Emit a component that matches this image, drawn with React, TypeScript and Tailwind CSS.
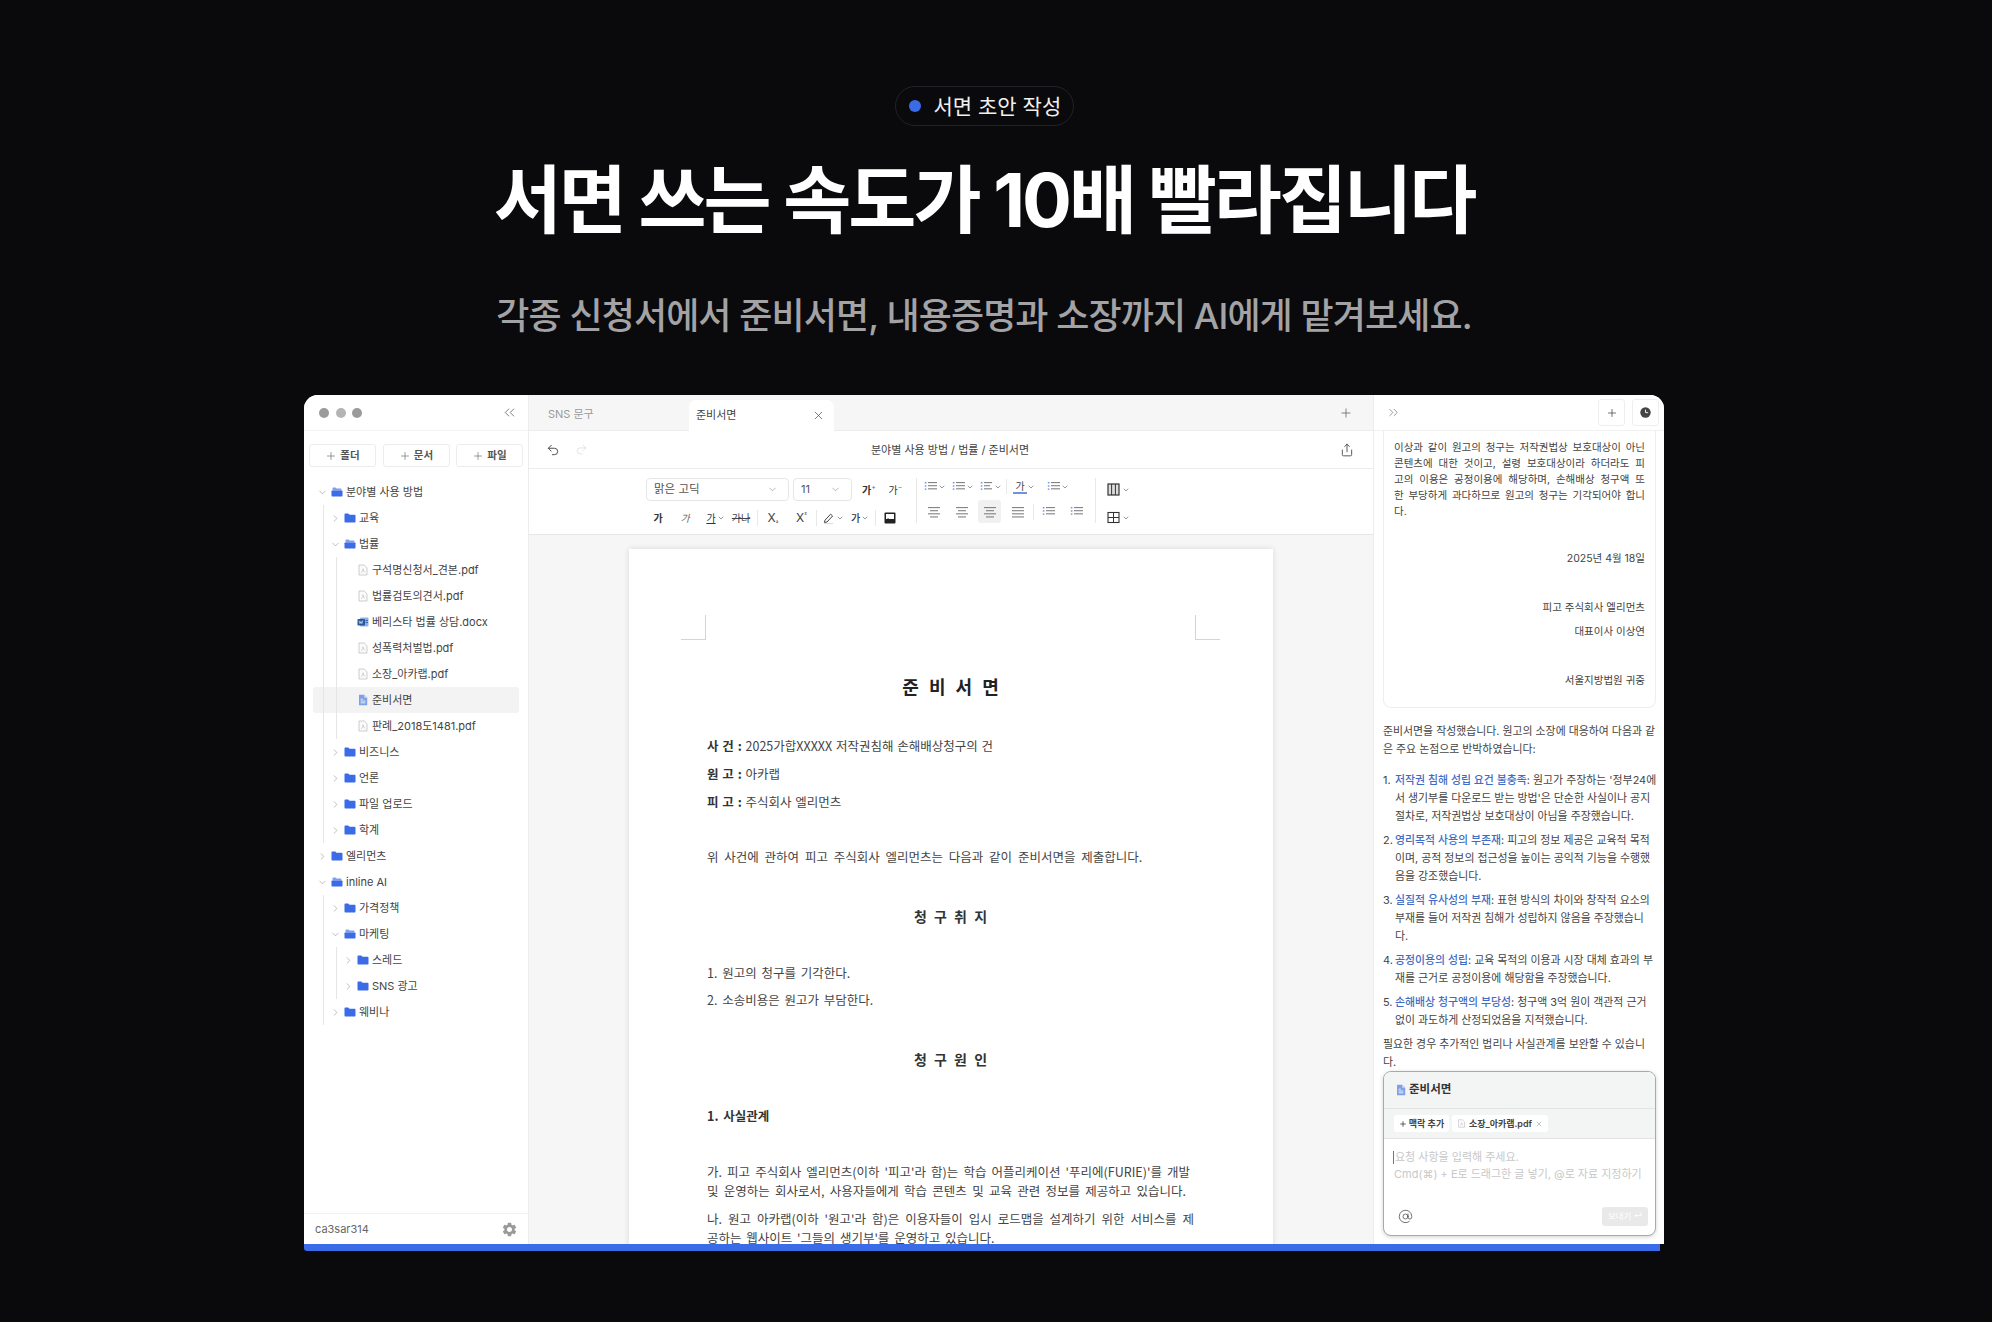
import {
  AtSign,
  ChevronDown,
  ChevronRight,
  ChevronsLeft,
  ChevronsRight,
  Plus,
  Redo2,
  Share,
  Undo2,
  X,
} from "lucide-react";
import { MdSettings } from "react-icons/md";

type Kind = "open" | "closed" | "pdf" | "docx" | "doc";

type Row = {
  label: string;
  depth: 0 | 1 | 2;
  kind: Kind;
  guides: number[];
  selected?: boolean;
};

const rows: Row[] = [
  { label: "분야별 사용 방법", depth: 0, kind: "open", guides: [] },
  { label: "교육", depth: 1, kind: "closed", guides: [1] },
  { label: "법률", depth: 1, kind: "open", guides: [1] },
  { label: "구석명신청서_견본.pdf", depth: 2, kind: "pdf", guides: [1, 2] },
  { label: "법률검토의견서.pdf", depth: 2, kind: "pdf", guides: [1, 2] },
  { label: "베리스타 법률 상담.docx", depth: 2, kind: "docx", guides: [1, 2] },
  { label: "성폭력처벌법.pdf", depth: 2, kind: "pdf", guides: [1, 2] },
  { label: "소장_아카랩.pdf", depth: 2, kind: "pdf", guides: [1, 2] },
  { label: "준비서면", depth: 2, kind: "doc", guides: [1, 2], selected: true },
  { label: "판례_2018도1481.pdf", depth: 2, kind: "pdf", guides: [1, 2] },
  { label: "비즈니스", depth: 1, kind: "closed", guides: [1] },
  { label: "언론", depth: 1, kind: "closed", guides: [1] },
  { label: "파일 업로드", depth: 1, kind: "closed", guides: [1] },
  { label: "학계", depth: 1, kind: "closed", guides: [1] },
  { label: "엘리먼츠", depth: 0, kind: "closed", guides: [] },
  { label: "inline AI", depth: 0, kind: "open", guides: [] },
  { label: "가격정책", depth: 1, kind: "closed", guides: [1] },
  { label: "마케팅", depth: 1, kind: "open", guides: [1] },
  { label: "스레드", depth: 2, kind: "closed", guides: [1, 2] },
  { label: "SNS 광고", depth: 2, kind: "closed", guides: [1, 2] },
  { label: "웨비나", depth: 1, kind: "closed", guides: [1] },
];

function FolderClosed() {
  return (
    <svg width="12" height="12" viewBox="0 0 12 12" className="shrink-0">
      <path
        d="M0.5 2.4c0-.6.4-1 1-1h2.7l1.3 1.4h5c.6 0 1 .4 1 1v5.8c0 .6-.4 1-1 1h-9c-.6 0-1-.4-1-1z"
        fill="#3b6be6"
      />
    </svg>
  );
}

function FolderOpen() {
  return (
    <svg width="12" height="12" viewBox="0 0 12 12" className="shrink-0">
      <path d="M1.5 2.2c0-.5.3-.8.8-.8h2.2l1.1 1.2h4.1c.5 0 .8.3.8.8v1H1.5z" fill="#7fa0ee" />
      <path
        d="M0.5 5.2c0-.5.4-.8.8-.8h9.4c.5 0 .8.3.8.8v4.4c0 .6-.4 1-1 1h-9c-.6 0-1-.4-1-1z"
        fill="#3b6be6"
      />
    </svg>
  );
}

function PdfFile({ size = 12 }: { size?: number }) {
  return (
    <svg width={size} height={size} viewBox="0 0 12 12" className="shrink-0">
      <path
        d="M2 1h5.2L10 3.8V11H2z"
        fill="#fbfbfb"
        stroke="#bfc1c2"
        strokeWidth="0.8"
        strokeLinejoin="round"
      />
      <path d="M4 8.8c1.2-.6 2.2-2.2 2-4 .4 1.8 1 3 2.2 3.6" fill="none" stroke="#b4b6b8" strokeWidth="0.6" />
    </svg>
  );
}

function DocxFile() {
  return (
    <svg width="12" height="12" viewBox="0 0 12 12" className="shrink-0">
      <rect x="3" y="1.5" width="8.5" height="9" rx="1" fill="#8fb0ea" />
      <rect x="0.5" y="3" width="7.5" height="6.5" rx="0.8" fill="#2b579a" />
      <path d="M2 4.6l1 3 .9-2.2.9 2.2 1-3" fill="none" stroke="#ffffff" strokeWidth="0.6" />
      <rect x="8.5" y="4" width="2.5" height="0.8" fill="#2b579a" />
      <rect x="8.5" y="6" width="2.5" height="0.8" fill="#2b579a" />
    </svg>
  );
}

function DocFile({ size = 12 }: { size?: number }) {
  return (
    <svg width={size} height={size} viewBox="0 0 12 12" className="shrink-0">
      <path d="M2 0.8h5.2L10.2 3.8V11.2H2z" fill="#7f9fe6" />
      <path d="M7.2 0.8v3h3" fill="#cddaf6" />
      <path d="M3.6 5.2h2.2M3.6 7h4.8M3.6 8.8h4.8" stroke="#ffffff" strokeWidth="0.8" />
    </svg>
  );
}

function TreeRow({ row }: { row: Row }) {
  const pad = row.depth === 0 ? "pl-[6px]" : row.depth === 1 ? "pl-[19px]" : "pl-[32px]";
  return (
    <div
      className={`relative flex h-[26px] items-center ${pad} ${
        row.selected ? "rounded-[3px] bg-[#f2f3f2]" : ""
      }`}
    >
      {row.guides.includes(1) && <span className="absolute inset-y-0 left-[10px] w-px bg-[#e6e6e6]" />}
      {row.guides.includes(2) && <span className="absolute inset-y-0 left-[23px] w-px bg-[#e6e6e6]" />}
      <span className="flex w-[7px] shrink-0 justify-center">
        {row.kind === "open" && <ChevronDown size={11} strokeWidth={1.4} className="shrink-0 text-[#999]" />}
        {row.kind === "closed" && <ChevronRight size={11} strokeWidth={1.4} className="shrink-0 text-[#999]" />}
      </span>
      <span className="ml-[5px] flex w-[12px] shrink-0 items-center">
        {row.kind === "open" && <FolderOpen />}
        {row.kind === "closed" && <FolderClosed />}
        {row.kind === "pdf" && <PdfFile />}
        {row.kind === "docx" && <DocxFile />}
        {row.kind === "doc" && <DocFile />}
      </span>
      <span className="ml-[3px] whitespace-nowrap text-[11px] text-[#444]">{row.label}</span>
    </div>
  );
}

function Sidebar() {
  return (
    <aside className="flex w-[225px] shrink-0 flex-col border-r border-[#ececec] bg-white">
      <div className="flex h-[36px] shrink-0 items-center justify-between border-b border-[#f3f3f3] pl-[15px] pr-[10px]">
        <div className="flex items-center gap-[6.5px]">
          <span className="size-[10px] rounded-full bg-[#9b9b9b]" />
          <span className="size-[10px] rounded-full bg-[#b4b4b4]" />
          <span className="size-[10px] rounded-full bg-[#9b9b9b]" />
        </div>
        <ChevronsLeft size={17} strokeWidth={1.2} className="text-[#666]" />
      </div>
      <div className="flex justify-between px-[5px] pt-[13px]">
        {["폴더", "문서", "파일"].map((t) => (
          <div
            key={t}
            className="flex h-[23px] w-[67px] items-center justify-center gap-[3px] rounded-[3px] border border-[#ececec] text-[10.5px] font-semibold text-[#555]"
          >
            <Plus size={12} strokeWidth={1.3} className="text-[#666]" />
            {t}
          </div>
        ))}
      </div>
      <div className="flex-1 pl-[9px] pr-[9px] pt-[12px]">
        {rows.map((r) => (
          <TreeRow key={r.label} row={r} />
        ))}
      </div>
      <div className="flex h-[31px] shrink-0 items-center justify-between border-t border-[#f1f1f1] pl-[11px] pr-[10px]">
        <span className="text-[11px] text-[#666]">ca3sar314</span>
        <MdSettings size={17} className="text-[#9a9a9a]" />
      </div>
    </aside>
  );
}

function Lines({ widths, dots = false }: { widths: number[]; dots?: boolean }) {
  return (
    <svg width="14" height="12" viewBox="0 0 14 12" className="shrink-0">
      {widths.map((w, i) => (
        <rect key={i} x={dots ? 4 : (14 - w) / 2} y={1.2 + i * 3.1} width={w} height="0.9" fill="#666" />
      ))}
      {dots &&
        [1, 4.3, 7.4].map((y) => <rect key={y} x="0.8" y={y} width="1.6" height="1.4" fill="#6f93e0" />)}
    </svg>
  );
}

function TinyChevron() {
  return <ChevronDown size={8} strokeWidth={2} className="shrink-0 text-[#666]" />;
}

function VDivider({ className }: { className: string }) {
  return <span className={`w-px shrink-0 bg-[#e8e8e8] ${className}`} />;
}

function Ga({ className = "" }: { className?: string }) {
  return <span className={`text-[10px] leading-none text-[#333] ${className}`}>가</span>;
}

function FormatToolbar() {
  return (
    <div className="flex h-[66px] shrink-0 border-b border-[#e6e6e6] pl-[117px] pt-[9px]">
      <div className="flex w-[270px] shrink-0 flex-col gap-[5px]">
        <div className="flex h-[23px] items-center">
          <div className="flex h-[23px] w-[143px] items-center justify-between rounded-[4px] border border-[#e6e6e6] pl-[7px] pr-[10px] text-[11.5px] text-[#555]">
            맑은 고딕
            <ChevronDown size={11} strokeWidth={1.3} className="text-[#888]" />
          </div>
          <div className="ml-[4px] flex h-[23px] w-[59px] items-center justify-between rounded-[4px] border border-[#e6e6e6] pl-[7px] pr-[10px] text-[11px] text-[#555]">
            11
            <ChevronDown size={11} strokeWidth={1.3} className="text-[#888]" />
          </div>
          <div className="flex w-[28px] items-center justify-center pl-[6px]">
            <Ga className="font-bold" />
            <span className="-mt-[7px] text-[7px] leading-none text-[#3b6be6]">+</span>
          </div>
          <div className="flex w-[28px] items-center justify-center pl-[3px]">
            <Ga />
            <span className="-mt-[7px] text-[7px] leading-none text-[#777]">−</span>
          </div>
        </div>
        <div className="flex h-[23px] items-center pl-[1px]">
          <span className="flex w-[22px] justify-center"><Ga className="font-bold" /></span>
          <span className="flex w-[32px] justify-center"><Ga className="italic text-[#666]" /></span>
          <span className="flex w-[29px] items-center justify-center gap-px">
            <Ga className="underline" />
            <TinyChevron />
          </span>
          <span className="flex w-[22px] justify-center whitespace-nowrap text-[10px] leading-none text-[#444] line-through">가나</span>
          <span className="flex w-[10px] justify-center"><VDivider className="h-[16px]" /></span>
          <span className="flex w-[22px] items-baseline justify-center text-[12px] leading-none text-[#444]">
            X<span className="text-[6px]">₂</span>
          </span>
          <span className="ml-[3px] flex w-[29px] items-start justify-center text-[12px] leading-none text-[#444]">
            X<span className="text-[6px] leading-none">²</span>
          </span>
          <VDivider className="h-[16px]" />
          <span className="ml-[3px] flex w-[27px] items-center justify-center gap-px">
            <svg width="12" height="12" viewBox="0 0 12 12" className="shrink-0">
              <path d="M2 8.2L7.6 2.2l2 1.8-5.6 6-2.6.4z" fill="none" stroke="#444" strokeWidth="1" />
              <path d="M1 11.6h9" stroke="#d9d9d9" strokeWidth="1" />
            </svg>
            <TinyChevron />
          </span>
          <span className="flex w-[26px] items-center justify-center gap-px">
            <Ga className="font-medium" />
            <TinyChevron />
          </span>
          <VDivider className="ml-[2px] h-[16px]" />
          <span className="flex w-[28px] justify-center">
            <svg width="12" height="12" viewBox="0 0 12 12">
              <rect x="0.5" y="0.5" width="11" height="11" rx="1" fill="#222" />
              <rect x="2" y="2" width="8" height="5" fill="#fff" />
              <path d="M1 10l3-4 2.4 2.4L8 7l3 3z" fill="#222" />
            </svg>
          </span>
        </div>
      </div>
      <div className="mb-[11px] flex w-[180px] shrink-0 flex-col gap-[5px] border-x border-[#e8e8e8]">
        <div className="flex h-[23px] items-center pl-[7px]">
          <span className="flex w-[21px] items-center"><Lines widths={[9, 9, 9]} dots /><TinyChevron /></span>
          <span className="ml-[7px] flex w-[22px] items-center"><Lines widths={[9, 9, 9]} dots /><TinyChevron /></span>
          <span className="ml-[6px] flex w-[22px] items-center"><Lines widths={[8, 6, 8]} dots /><TinyChevron /></span>
          <VDivider className="ml-[4px] h-[15px]" />
          <span className="ml-[6px] flex w-[26px] items-center">
            <span className="relative flex h-[14px] w-[14px] justify-center border-b-2 border-[#6f93e0] text-[10px] leading-[12px] text-[#444]">가</span>
            <TinyChevron />
          </span>
          <span className="ml-[8px] flex w-[26px] items-center"><Lines widths={[9, 9, 9]} dots /><TinyChevron /></span>
        </div>
        <div className="flex h-[23px] items-center pl-[5px]">
          <span className="flex size-[23px] items-center justify-center"><Lines widths={[12, 8, 12, 8]} /></span>
          <span className="ml-[5px] flex size-[23px] items-center justify-center"><Lines widths={[12, 8, 12, 8]} /></span>
          <span className="ml-[5px] flex size-[23px] items-center justify-center rounded-[3px] bg-[#f0f1f0]"><Lines widths={[12, 8, 12, 8]} /></span>
          <span className="ml-[5px] flex size-[23px] items-center justify-center"><Lines widths={[12, 12, 12, 12]} /></span>
          <VDivider className="ml-[4px] h-[16px]" />
          <span className="ml-[3px] flex size-[23px] items-center justify-center"><Lines widths={[9, 9, 9]} dots /></span>
          <span className="ml-[5px] flex size-[23px] items-center justify-center"><Lines widths={[9, 9, 9]} dots /></span>
        </div>
      </div>
      <div className="flex flex-col gap-[5px] pl-[11px]">
        <div className="flex h-[23px] items-center gap-[2px]">
          <svg width="13" height="13" viewBox="0 0 13 13" className="shrink-0">
            <rect x="1" y="1" width="11" height="11" fill="#ddd" stroke="#333" strokeWidth="1.2" />
            <path d="M4.6 1v11M8.4 1v11" stroke="#333" strokeWidth="1" />
          </svg>
          <TinyChevron />
        </div>
        <div className="flex h-[23px] items-center gap-[2px]">
          <svg width="13" height="13" viewBox="0 0 13 13" className="shrink-0">
            <rect x="1" y="1.5" width="11" height="10" fill="none" stroke="#333" strokeWidth="1.1" />
            <path d="M1 6.5h11M6.5 1.5v10" stroke="#333" strokeWidth="1" />
          </svg>
          <TinyChevron />
        </div>
      </div>
    </div>
  );
}

function JLine({ children, className = "" }: { children: React.ReactNode; className?: string }) {
  return (
    <p className={`h-[19px] whitespace-nowrap text-justify leading-[19px] [text-align-last:justify] ${className}`}>
      {children}
    </p>
  );
}

function Paper() {
  return (
    <div className="relative mx-auto mt-[14px] w-[644px] bg-white pl-[78px] pr-[79px] pt-[125px] font-['Noto_Sans_CJK_KR',sans-serif] text-[12.5px] text-[#444] shadow-[0_0_6px_rgba(0,0,0,0.12)] [word-spacing:2px]">
      <span className="absolute left-[52px] top-[66px] h-[25px] w-[25px] border-b border-r border-[#d4d4d4]" />
      <span className="absolute right-[53px] top-[66px] h-[25px] w-[25px] border-b border-l border-[#d4d4d4]" />
      <h2 className="text-center text-[18px] font-bold leading-[24px] text-[#222] [word-spacing:6px]">준 비 서 면</h2>
      <p className="mt-[38px] leading-[20px] [word-spacing:1px]"><b className="text-[#333]">사 건 :</b> 2025가합XXXXX 저작권침해 손해배상청구의 건</p>
      <p className="mt-[8px] leading-[20px] [word-spacing:1px]"><b className="text-[#333]">원 고 :</b> 아카랩</p>
      <p className="mt-[8px] leading-[20px] [word-spacing:1px]"><b className="text-[#333]">피 고 :</b> 주식회사 엘리먼츠</p>
      <p className="mt-[35px] leading-[20px] [word-spacing:3px]">위 사건에 관하여 피고 주식회사 엘리먼츠는 다음과 같이 준비서면을 제출합니다.</p>
      <h3 className="mt-[37px] text-center text-[14px] font-bold leading-[24px] text-[#333] [word-spacing:4px]">청 구 취 지</h3>
      <p className="mt-[35px] leading-[20px]">1. 원고의 청구를 기각한다.</p>
      <p className="mt-[7px] leading-[20px]">2. 소송비용은 원고가 부담한다.</p>
      <h3 className="mt-[37px] text-center text-[14px] font-bold leading-[24px] text-[#333] [word-spacing:4px]">청 구 원 인</h3>
      <p className="mt-[35px] font-bold leading-[20px] text-[#333]">1. 사실관계</p>
      <JLine className="mt-[36px] pr-[4px]">가. 피고 주식회사 엘리먼츠(이하 '피고'라 함)는 학습 어플리케이션 '푸리에(FURIE)'를 개발</JLine>
      <JLine className="pr-[8px]">및 운영하는 회사로서, 사용자들에게 학습 콘텐츠 및 교육 관련 정보를 제공하고 있습니다.</JLine>
      <JLine className="mt-[9px]">나. 원고 아카랩(이하 '원고'라 함)은 이용자들이 입시 로드맵을 설계하기 위한 서비스를 제</JLine>
      <p className="h-[19px] whitespace-nowrap leading-[19px]">공하는 웹사이트 '그들의 생기부'를 운영하고 있습니다.</p>
    </div>
  );
}

function Editor() {
  return (
    <main className="flex min-w-0 flex-1 flex-col border-r border-[#ececec] bg-[#f6f6f6]">
      <div className="flex h-[36px] shrink-0 items-end border-b border-[#ececec] bg-[#f6f6f6] pr-[20px]">
        <div className="flex h-[35px] w-[160px] items-center pl-[19px] pt-[4px] text-[11px] text-[#9a9a9a]">SNS 문구</div>
        <div className="-mb-px flex h-[31px] w-[145px] items-center justify-between rounded-t-[7px] bg-white pl-[7px] pr-[9px] text-[11px] text-[#444]">
          준비서면
          <X size={13} strokeWidth={1.4} className="text-[#555]" />
        </div>
        <div className="flex h-[35px] flex-1 items-center justify-end">
          <Plus size={14} strokeWidth={1.2} className="text-[#555]" />
        </div>
      </div>
      <div className="flex h-[38px] shrink-0 items-center justify-between border-b border-[#ececec] bg-white pl-[17px] pr-[19px]">
        <div className="flex w-[60px] items-center gap-[15px]">
          <Undo2 size={14} strokeWidth={1.6} className="text-[#444]" />
          <Redo2 size={13} strokeWidth={1.2} className="text-[#d6d6d6]" />
        </div>
        <span className="pt-[1px] text-[11px] text-[#444]">분야별 사용 방법 / 법률 / 준비서면</span>
        <div className="flex w-[60px] justify-end">
          <Share size={14} strokeWidth={1.5} className="text-[#444]" />
        </div>
      </div>
      <div className="bg-white"><FormatToolbar /></div>
      <div className="min-h-0 flex-1 overflow-hidden"><Paper /></div>
    </main>
  );
}

const answer: { n: number; title: string; lines: string[] }[] = [
  { n: 1, title: "저작권 침해 성립 요건 불충족", lines: ["원고가 주장하는 '정부24에", "서 생기부를 다운로드 받는 방법'은 단순한 사실이나 공지", "절차로, 저작권법상 보호대상이 아님을 주장했습니다."] },
  { n: 2, title: "영리목적 사용의 부존재", lines: ["피고의 정보 제공은 교육적 목적", "이며, 공적 정보의 접근성을 높이는 공익적 기능을 수행했", "음을 강조했습니다."] },
  { n: 3, title: "실질적 유사성의 부재", lines: ["표현 방식의 차이와 창작적 요소의", "부재를 들어 저작권 침해가 성립하지 않음을 주장했습니", "다."] },
  { n: 4, title: "공정이용의 성립", lines: ["교육 목적의 이용과 시장 대체 효과의 부", "재를 근거로 공정이용에 해당함을 주장했습니다."] },
  { n: 5, title: "손해배상 청구액의 부당성", lines: ["청구액 3억 원이 객관적 근거", "없이 과도하게 산정되었음을 지적했습니다."] },
];

function Composer() {
  return (
    <div className="flex h-[165px] shrink-0 flex-col overflow-hidden rounded-[8px] border border-[#a9a9a9] bg-white shadow-[0_1px_4px_rgba(0,0,0,0.18)]">
      <div className="flex h-[37px] shrink-0 items-center gap-[2px] border-b border-[#e2e3e3] bg-[#f3f4f4] pl-[11px] text-[11.5px] font-semibold text-[#333]">
        <DocFile size={12} />
        준비서면
      </div>
      <div className="flex h-[30px] shrink-0 items-center gap-[3px] border-b border-[#e2e3e3] bg-[#f3f4f4] pl-[10px]">
        <span className="flex h-[17px] w-[55px] items-center justify-center gap-[2px] whitespace-nowrap rounded-[3px] bg-white text-[9px] font-semibold text-[#444]">
          <Plus size={8} strokeWidth={2.5} className="text-[#444]" />맥락 추가
        </span>
        <span className="flex h-[17px] w-[96px] items-center justify-center gap-[3px] whitespace-nowrap rounded-[3px] bg-white text-[9px] font-semibold text-[#444]">
          <PdfFile size={9} />소장_아카랩.pdf
          <X size={8} strokeWidth={1.5} className="text-[#888]" />
        </span>
      </div>
      <div className="relative flex-1 pl-[10px] pt-[10px] text-[11px] leading-[17px] text-[#c8c8c8]">
        <div className="flex items-center">
          <span className="-ml-[1px] mr-[1px] h-[13px] w-px bg-[#777]" />요청 사항을 입력해 주세요.
        </div>
        <div>Cmd(⌘) + E로 드래그한 글 넣기, @로 자료 지정하기</div>
        <div className="absolute inset-x-[7px] bottom-[9px] flex items-center justify-between">
          <AtSign size={15} strokeWidth={1.3} className="ml-[7px] text-[#555]" />
          <span className="flex h-[19px] w-[46px] items-center justify-center rounded-[3px] bg-[#e9e9e9] text-[8.5px] text-white">보내기 ↵</span>
        </div>
      </div>
    </div>
  );
}

function ChatPanel() {
  return (
    <aside className="flex w-[290px] shrink-0 flex-col bg-white">
      <div className="flex h-[36px] shrink-0 items-center justify-between border-b border-[#f0f0f0] pl-[12px] pr-[5px]">
        <ChevronsRight size={15} strokeWidth={1.2} className="text-[#777]" />
        <div className="flex items-center gap-[7px]">
          <span className="flex size-[27px] items-center justify-center rounded-[3px] border border-[#eee]">
            <Plus size={12} strokeWidth={1.5} className="text-[#444]" />
          </span>
          <span className="flex size-[27px] items-center justify-center rounded-[3px] border border-[#eee]">
            <svg width="11" height="11" viewBox="0 0 11 11">
              <circle cx="5.5" cy="5.5" r="5.2" fill="#444" />
              <path d="M5.5 2.6v3h2.6" fill="none" stroke="#fff" strokeWidth="0.9" />
            </svg>
          </span>
        </div>
      </div>
      <div className="flex min-h-0 flex-1 flex-col pl-[9px] pr-[8px] pb-[8px]">
        <div className="h-[277px] shrink-0 rounded-b-[8px] border-x border-b border-[#eeeeee] pl-[10px] pr-[10px] pt-[9px] text-[10.5px] leading-[16px] text-[#444]">
          <p className="text-justify [text-align-last:justify]">이상과 같이 원고의 청구는 저작권법상 보호대상이 아닌</p>
          <p className="text-justify [text-align-last:justify]">콘텐츠에 대한 것이고, 설령 보호대상이라 하더라도 피</p>
          <p className="text-justify [text-align-last:justify]">고의 이용은 공정이용에 해당하며, 손해배상 청구액 또</p>
          <p className="text-justify [text-align-last:justify]">한 부당하게 과다하므로 원고의 청구는 기각되어야 합니</p>
          <p>다.</p>
          <p className="mt-[31px] text-right">2025년 4월 18일</p>
          <p className="mt-[33px] text-right">피고 주식회사 엘리먼츠</p>
          <p className="mt-[8px] text-right">대표이사 이상연</p>
          <p className="mt-[33px] text-right">서울지방법원 귀중</p>
        </div>
        <div className="whitespace-nowrap text-[10.9px] leading-[18px] text-[#444]">
          <p className="mt-[14px]">준비서면을 작성했습니다. 원고의 소장에 대응하여 다음과 같<br />은 주요 논점으로 반박하였습니다:</p>
          <div className="mt-[13px] flex flex-col gap-[6px]">
            {answer.map((a) => (
              <div key={a.n} className="flex">
                <span className="w-[12px] shrink-0">{a.n}.</span>
                <div>
                  <div>
                    <b className="font-medium text-[#3f6cc4]">{a.title}</b>: {a.lines[0]}
                  </div>
                  {a.lines.slice(1).map((l) => (
                    <div key={l}>{l}</div>
                  ))}
                </div>
              </div>
            ))}
          </div>
          <p className="mt-[6px]">필요한 경우 추가적인 법리나 사실관계를 보완할 수 있습니<br />다.</p>
        </div>
        <Composer />
      </div>
    </aside>
  );
}

export default function App() {
  return (
    <div className="flex min-h-screen w-full flex-col items-center bg-[#0a0a0d] pr-[24px] pt-[86px] font-['Inter','Noto_Sans_CJK_KR',sans-serif]">
      <div className="flex h-[40px] w-[179px] items-center gap-[13px] rounded-full border border-[#222226] pl-[13px]">
        <span className="size-[12px] rounded-full bg-[#3b6ce8]" />
        <span className="whitespace-nowrap text-[21px] leading-none text-[#f0f0f0]">서면 초안 작성</span>
      </div>
      <h1 className="mt-[34px] whitespace-nowrap text-[74px] font-bold leading-[80px] tracking-[-0.04em] text-white">
        서면 쓰는 속도가 10배 빨라집니다
      </h1>
      <p className="mt-[54px] whitespace-nowrap text-[36px] font-medium leading-[44px] tracking-[-0.025em] text-[#a3a3a6]">
        각종 신청서에서 준비서면, 내용증명과 소장까지 AI에게 맡겨보세요.
      </p>
      <div className="mt-[57px] w-[1360px]">
        <div className="flex h-[849px] overflow-hidden rounded-t-[14px] bg-white">
          <Sidebar />
          <Editor />
          <ChatPanel />
        </div>
        <div className="h-[7px] w-[1356px] rounded-bl-[3px] bg-[#3b6ce8]" />
      </div>
    </div>
  );
}
